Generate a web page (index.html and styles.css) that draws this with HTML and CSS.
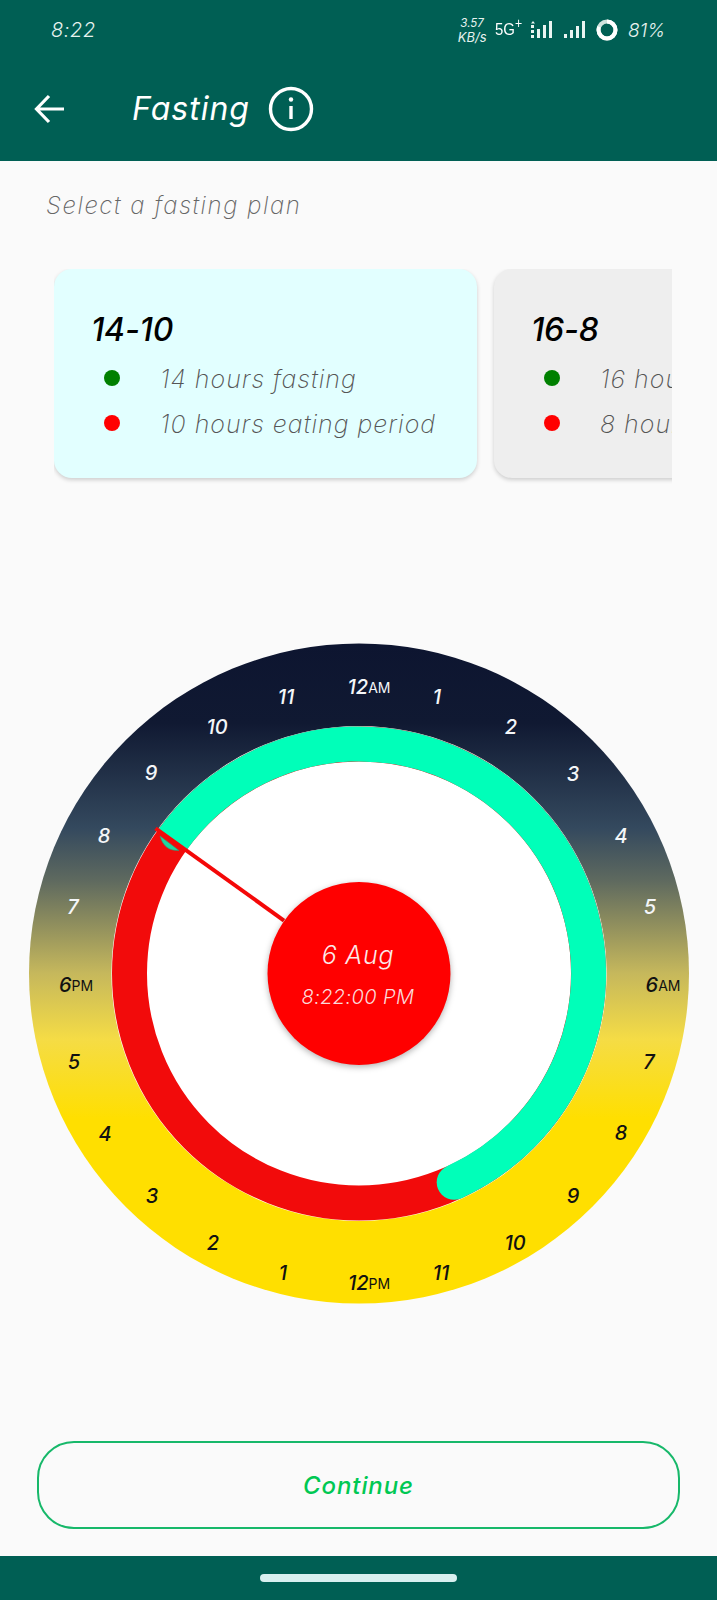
FILE: index.html
```html
<!DOCTYPE html>
<html lang="en">
<head>
<meta charset="utf-8">
<title>Fasting</title>
<link rel="stylesheet" href="styles.css">
</head>
<body>
<div class="app">
  <div class="status">
    <span class="clock">8:22</span>
    <div class="status-right">
      <span class="speed"><span>3.57</span><span>KB/s</span></span>
      <span class="net">5G<sup>+</sup></span>
      <svg class="signals" width="62" height="20" viewBox="0 0 62 20" aria-hidden="true">
        <path class="sig" d="M2 1 4 3.5H0ZM0 5h3v3H0ZM0 10h3v3H0ZM0 15h3v3H0ZM6 9h3v9H6ZM12 5h3v13h-3ZM18 1h3v17h-3ZM33 14h3v4h-3ZM39 10h3v8h-3ZM45 6h3v12h-3ZM51 1h3v17h-3Z"/>
      </svg>
      <svg class="battery" width="24" height="24" viewBox="0 0 24 24" aria-hidden="true">
        <circle class="batt-track" cx="12" cy="12" r="8.5"/>
        <circle class="batt-fill" cx="12" cy="12" r="8.5" pathLength="100"/>
      </svg>
      <span class="pct">81%</span>
    </div>
  </div>
  <header class="bar">
    <svg class="back" width="32" height="30" viewBox="0 0 32 30" aria-hidden="true">
      <path d="M30 15H3M15 2 2.5 15 15 28"/>
    </svg>
    <h1 class="title">Fasting</h1>
    <svg class="info" width="46" height="46" viewBox="0 0 46 46" aria-hidden="true">
      <circle cx="23" cy="23" r="20.5"/>
      <path d="M23 20v13"/>
      <circle class="info-dot" cx="23" cy="13.5" r="2.2"/>
    </svg>
  </header>
  <main class="content">
    <p class="lead">Select a fasting plan</p>
    <div class="plans">
      <section class="plan plan-active">
        <h2 class="plan-name">14-10</h2>
        <div class="plan-row"><i class="dot dot-green"></i><span>14 hours fasting</span></div>
        <div class="plan-row"><i class="dot dot-red"></i><span>10 hours eating period</span></div>
      </section>
      <section class="plan">
        <h2 class="plan-name">16-8</h2>
        <div class="plan-row"><i class="dot dot-green"></i><span>16 hours fasting</span></div>
        <div class="plan-row"><i class="dot dot-red"></i><span>8 hours eating period</span></div>
      </section>
    </div>
    <svg class="dial" width="717" height="690" viewBox="0 630 717 690" role="img" aria-label="Fasting clock">
      <defs>
        <linearGradient id="sky" x1="0" y1="0" x2="0" y2="1">
          <stop offset="0" stop-color="#0d1530"/>
          <stop offset="0.12" stop-color="#101932"/>
          <stop offset="0.28" stop-color="#34495e"/>
          <stop offset="0.36" stop-color="#5f6a5f"/>
          <stop offset="0.5" stop-color="#c6b85c"/>
          <stop offset="0.6" stop-color="#f5dc45"/>
          <stop offset="0.72" stop-color="#ffdf00"/>
          <stop offset="1" stop-color="#ffdf00"/>
        </linearGradient>
      </defs>
      <circle cx="359" cy="973.5" r="330" fill="url(#sky)"/>
      <circle cx="359" cy="973.5" r="247.6" class="disc"/>
      <circle cx="359" cy="973.5" r="229.5" class="ring-red"/>
      <path class="ring-green" d="M172.2 840.2A229.5 229.5 0 1 1 454.2 1182.3"/>
      <circle cx="454.2" cy="1182.3" r="17.5" class="cap-green"/>
      <path class="blob" d="M160 836C163 847 170 851 179 850.5Z"/>
      <path class="needle" d="M155.5 828.3 284 920.5"/>
      <circle cx="359" cy="973.5" r="91.5" class="hub"/>
      <text x="358" y="955" class="hub-date">6 Aug</text>
      <text x="358" y="997" class="hub-time">8:22:00 PM</text>

      <g class="hours-light">
        <text x="369" y="687">12<tspan class="ampm">AM</tspan></text>
        <text x="437" y="697">1</text>
        <text x="511" y="727">2</text>
        <text x="573" y="774">3</text>
        <text x="621" y="836">4</text>
        <text x="650" y="907">5</text>
        <text x="73" y="907">7</text>
        <text x="104" y="836">8</text>
        <text x="151" y="773">9</text>
        <text x="217" y="727">10</text>
        <text x="286" y="697">11</text>
      </g>
      <g class="hours-dark">
        <text x="663" y="985">6<tspan class="ampm">AM</tspan></text>
        <text x="649" y="1062">7</text>
        <text x="621" y="1133">8</text>
        <text x="573" y="1196">9</text>
        <text x="515" y="1243">10</text>
        <text x="441" y="1273">11</text>
        <text x="369" y="1283">12<tspan class="ampm">PM</tspan></text>
        <text x="283" y="1273">1</text>
        <text x="213" y="1243">2</text>
        <text x="152" y="1196">3</text>
        <text x="105" y="1134">4</text>
        <text x="74" y="1062">5</text>
        <text x="76" y="985">6<tspan class="ampm">PM</tspan></text>
      </g>
    </svg>
    <button class="continue" type="button">Continue</button>
  </main>
  <footer class="nav"><span class="pill"></span></footer>
</div>
</body>
</html>
```
FILE: styles.css
```css
* { box-sizing: border-box; }
html, body { margin: 0; padding: 0; }
body { background: #fafafa; font-family: "Inter", "Open Sans", "Liberation Sans", sans-serif; }
.app { width: 717px; height: 1600px; display: flex; flex-direction: column; overflow: hidden; }

.status { height: 60px; flex: none; background: #005f54; color: #e6f2ef; display: flex; align-items: center; justify-content: space-between; padding: 0 52px 0 51px; }
.clock { font-size: 20px; font-style: italic; font-weight: 300; letter-spacing: .6px; }
.status-right { display: flex; align-items: center; }
.speed { display: flex; flex-direction: column; align-items: center; font-size: 13px; line-height: 14px; font-style: italic; width: 34px; }
.speed span:first-child { font-size: 11.5px; }
.net { font-family: "Liberation Sans", sans-serif; font-size: 17px; font-weight: 400; margin-left: 6px; width: 36px; transform: scaleX(.88); transform-origin: left center; white-space: nowrap; color: #fff; }
.net sup { font-size: 14px; line-height: 0; }
.signals { margin-left: 0; }
.sig { fill: #eaf5f2; }
.battery { margin-left: 2px; }
.batt-track { fill: none; stroke: #cfe3de; stroke-width: 4; }
.batt-fill { fill: none; stroke: #ffffff; stroke-width: 4; stroke-dasharray: 81 100; transform: rotate(-90deg); transform-origin: center; }
.pct { font-size: 19px; font-style: italic; font-weight: 300; margin-left: 9px; }

.bar { height: 101px; flex: none; background: #005f54; color: #fff; display: flex; align-items: center; padding: 0 0 4px 34px; }
.back { fill: none; stroke: #fff; stroke-width: 3.2; flex: none; }
.title { margin: 0 0 0 66px; font-size: 32px; font-weight: 400; font-style: italic; letter-spacing: 1px; line-height: 40px; width: 135px; white-space: nowrap; }
.info { fill: none; stroke: #fff; stroke-width: 3.4; margin-left: 1px; flex: none; }
.info-dot { fill: #fff; stroke: none; }

.content { flex: 1; min-height: 0; display: flex; flex-direction: column; background: #fafafa; }
.lead { margin: 32px 0 0 46px; font-size: 24px; line-height: 26px; font-style: italic; font-weight: 200; color: #666; letter-spacing: 1.55px; }
.plans { margin: 50px 45px 0 54px; display: flex; gap: 17px; overflow: hidden; padding-bottom: 6px; height: 216px; flex: none; }
.plan { flex: none; width: 423px; height: 209px; background: #eeeeee; border-radius: 18px; padding: 39px 0 0 37px; box-shadow: 0 2px 4px rgba(0,0,0,.18); white-space: nowrap; }
.plan-active { background: #e2ffff; }
.plan-name { margin: 0 0 18px; font-size: 32px; line-height: 44px; font-weight: 500; font-style: italic; color: #000; letter-spacing: -.2px; }
.plan-row { display: flex; align-items: center; height: 45px; font-size: 25px; line-height: 30px; font-style: italic; font-weight: 200; color: #555; letter-spacing: 1px; margin-top: -14px; margin-bottom: 14px; }
.dot { width: 16px; height: 16px; border-radius: 50%; flex: none; margin: -2px 0 0 13px; }
.dot-green { background: #008000; }
.dot-red { background: #ff0000; }
.plan-row span { margin-left: 40px; }

.dial { display: block; flex: none; margin-top: 145px; }
.disc { fill: #ffffff; }
.ring-red { fill: none; stroke: #f20b0b; stroke-width: 35; }
.ring-green { fill: none; stroke: #00ffb9; stroke-width: 35; }
.cap-green { fill: #00ffb9; }
.blob { fill: #1fd7a0; stroke: #3a8f70; stroke-width: .6; }
.needle { fill: none; stroke: #f40808; stroke-width: 4; }
.hub { fill: #ff0000; filter: drop-shadow(0 2px 3px rgba(0,0,0,.3)); }
.hub-date { fill: #fbeaea; font-size: 25px; font-style: italic; font-weight: 300; text-anchor: middle; dominant-baseline: central; letter-spacing: .8px; }
.hub-time { fill: #fbdada; font-size: 20px; font-style: italic; font-weight: 300; text-anchor: middle; dominant-baseline: central; letter-spacing: .4px; }
.hours-light text, .hours-dark text { font-size: 20px; font-style: italic; font-weight: 500; text-anchor: middle; dominant-baseline: central; }
.hours-light text { fill: #f4f6f8; }
.hours-dark text { fill: #111; }
.ampm { font-size: 14px; font-style: normal; font-weight: 400; }

.continue { display: block; flex: none; margin: 121px 0 0 37px; width: 643px; height: 88px; border: 2px solid #17b86a; border-radius: 37px; background: transparent; color: #00c853; font-family: "Inter", "Open Sans", sans-serif; font-size: 24px; font-style: italic; font-weight: 500; letter-spacing: .9px; padding: 0; }

.nav { height: 44px; flex: none; background: #005f54; display: flex; justify-content: center; padding: 18px 0 0 0; margin-top: 27px; }
.pill { width: 197px; height: 8px; border-radius: 4px; background: #d8f0f0; }
```
